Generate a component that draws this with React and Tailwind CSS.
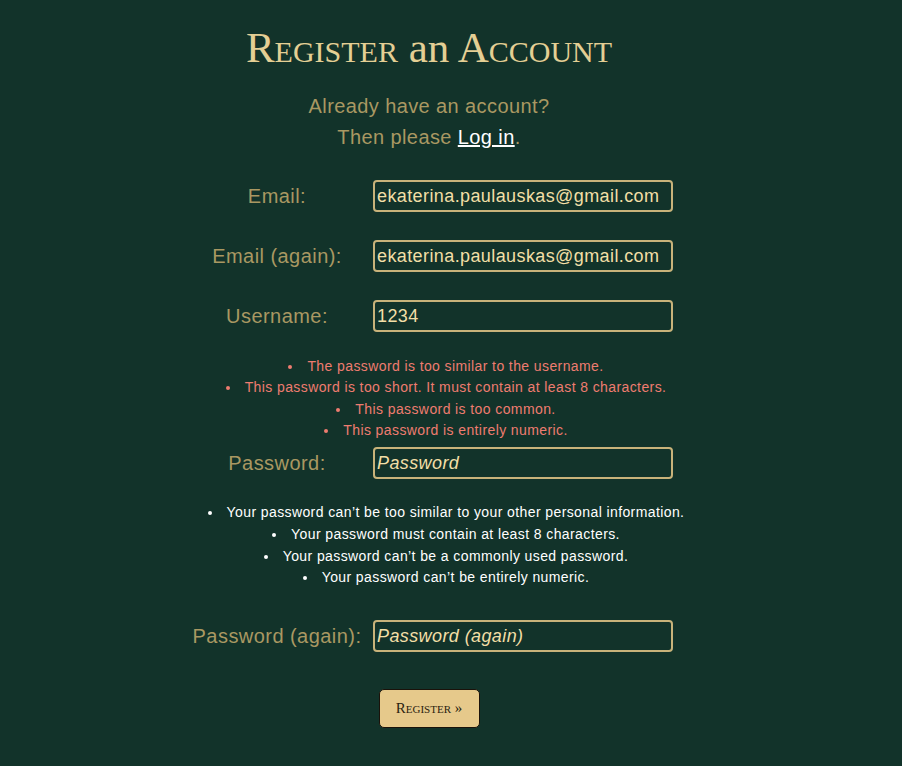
import React from "react";

const sans = { fontFamily: '"Liberation Sans", Arial, sans-serif' };

function Row({ label, value, placeholder, type = "text", className = "" }) {
  return (
    <div className={`flex items-center w-[484px] ml-[4px] ${className}`}>
      <label className="w-[176px] text-center text-[20px] tracking-[0.45px] text-[#a99862] leading-[24px]">{label}</label>
      <input
        type={type}
        defaultValue={value}
        placeholder={placeholder}
        className="ml-[8px] w-[300px] h-[32px] rounded-[4px] border-2 border-[#c8b37a] bg-transparent px-[2px] text-[18px] tracking-[0.4px] text-[#f2dfa6] outline-none placeholder:italic placeholder:text-[#f2dfa6]"
        style={sans}
      />
    </div>
  );
}

export default function App() {
  return (
    <div className="min-h-screen w-full bg-[#12332a]" style={sans}>
      <div className="w-[858px] flex flex-col items-center pb-[38px]">
        <h1
          className="mt-[26px] text-[43px] leading-[43px] text-[#e4cf94]"
          style={{ fontFamily: '"Liberation Serif", "Times New Roman", serif', fontVariant: "small-caps" }}
        >
          Register <span style={{ fontVariant: "normal" }}>an</span> Account
        </h1>
        <div className="mt-[22px] text-center text-[20px] tracking-[0.4px] leading-[31px] text-[#a99862]">
          <p>Already have an account?</p>
          <p>
            Then please <a href="#" className="text-white underline">Log in</a>.
          </p>
        </div>
        <form className="flex flex-col items-center w-full" onSubmit={(e) => e.preventDefault()}>
          <Row label="Email:" value="ekaterina.paulauskas@gmail.com" className="mt-[27px]" />
          <Row label="Email (again):" value="ekaterina.paulauskas@gmail.com" className="mt-[28px]" />
          <Row label="Username:" value="1234" className="mt-[28px]" />
          <ul className="mt-[24px] w-full pl-[34px] list-disc list-inside text-center text-[14px] tracking-[0.4px] leading-[21.3px] text-[#ee7c70]">
            <li>The password is too similar to the username.</li>
            <li>This password is too short. It must contain at least 8 characters.</li>
            <li>This password is too common.</li>
            <li>This password is entirely numeric.</li>
          </ul>
          <Row label="Password:" placeholder="Password" type="password" className="mt-[6px]" />
          <ul className="mt-[23px] w-full pl-[34px] list-disc list-inside text-center text-[14px] tracking-[0.4px] leading-[21.7px] text-white">
            <li>Your password can’t be too similar to your other personal information.</li>
            <li>Your password must contain at least 8 characters.</li>
            <li>Your password can’t be a commonly used password.</li>
            <li>Your password can’t be entirely numeric.</li>
          </ul>
          <Row label="Password (again):" placeholder="Password (again)" type="password" className="mt-[31px]" />
          <button
            type="submit"
            className="mt-[37px] w-[101px] h-[39px] rounded-[5px] border border-[#1a120a] bg-[#e6c98b] text-[15px] text-[#2b1e10]"
            style={{ fontFamily: '"Liberation Serif", "Times New Roman", serif', fontVariant: "small-caps" }}
          >
            Register »
          </button>
        </form>
      </div>
    </div>
  );
}
